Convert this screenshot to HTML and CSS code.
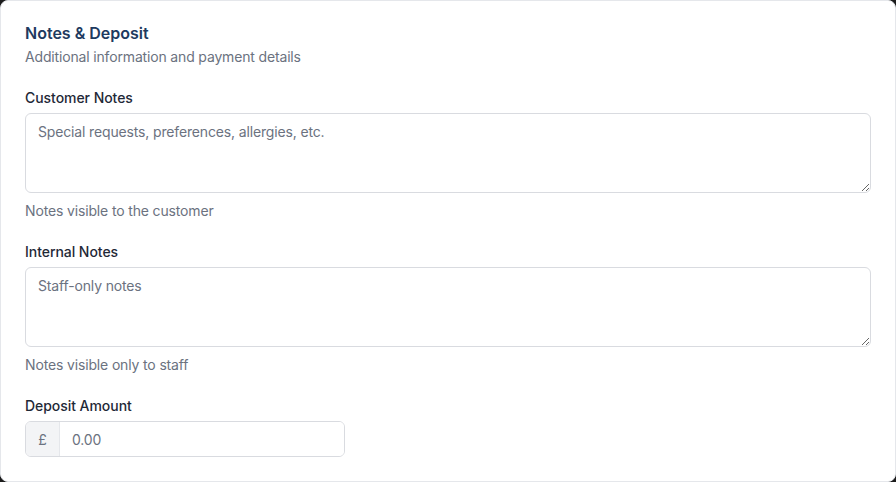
FILE: index.html
```html
<!DOCTYPE html>
<html>
<head>
<meta charset="utf-8">
<link rel="stylesheet" href="styles.css">
</head>
<body>
<div class="card">
  <h2 class="title">Notes &amp; Deposit</h2>
  <p class="subtitle">Additional information and payment details</p>
  <div class="field">
    <label class="label">Customer Notes</label>
    <textarea class="textarea" placeholder="Special requests, preferences, allergies, etc."></textarea>
    <p class="help">Notes visible to the customer</p>
  </div>
  <div class="field">
    <label class="label">Internal Notes</label>
    <textarea class="textarea" placeholder="Staff-only notes"></textarea>
    <p class="help">Notes visible only to staff</p>
  </div>
  <div class="field">
    <label class="label">Deposit Amount</label>
    <div class="money">
      <span class="prefix">£</span>
      <input class="amount" type="text" placeholder="0.00">
    </div>
  </div>
</div>
</body>
</html>
```
FILE: styles.css
```css
* { box-sizing: border-box; }
html, body { margin: 0; padding: 0; }
body {
  background: #1c1c1c;
  font-family: Inter, "Noto Sans", sans-serif;
  width: 896px;
  height: 482px;
}
.card {
  width: 896px;
  height: 482px;
  background: #fff;
  border: 1px solid #e5e7eb;
  border-radius: 8px;
  padding: 20px 24px 24px;
}
.title {
  margin: 0;
  font-size: 16px;
  line-height: 24px;
  font-weight: 600;
  color: #1e3a5f;
}
.subtitle {
  margin: 2px 0 0;
  font-size: 14px;
  line-height: 20px;
  letter-spacing: -0.16px;
  color: #6b7280;
}
.field { margin-top: 21px; }
.label {
  display: block;
  font-size: 14px;
  line-height: 20px;
  font-weight: 500;
  letter-spacing: -0.05px;
  color: #1f2937;
  margin-bottom: 5px;
}
.textarea {
  display: block;
  width: 846px;
  height: 80px;
  border: 1px solid #d9dbe0;
  border-radius: 6px;
  padding: 8px 12px;
  font-family: inherit;
  font-size: 14px;
  line-height: 20px;
  letter-spacing: -0.15px;
  color: #111827;
  resize: vertical;
}
.textarea::placeholder, .amount::placeholder { color: #6b7280; }
.help {
  margin: 8px 0 0;
  font-size: 14px;
  line-height: 20px;
  letter-spacing: -0.15px;
  color: #6b7280;
}
.money {
  display: flex;
  width: 320px;
  height: 36px;
  border: 1px solid #d9dbe0;
  border-radius: 6px;
  overflow: hidden;
}
.prefix {
  width: 34px;
  flex: none;
  background: #f3f4f6;
  border-right: 1px solid #e5e7eb;
  display: flex;
  align-items: center;
  justify-content: center;
  font-size: 14px;
  color: #6b7280;
}
.amount {
  flex: 1;
  min-width: 0;
  border: 0;
  outline: none;
  padding: 0 12px;
  font-family: inherit;
  font-size: 14px;
  letter-spacing: -0.15px;
  color: #111827;
}
```
